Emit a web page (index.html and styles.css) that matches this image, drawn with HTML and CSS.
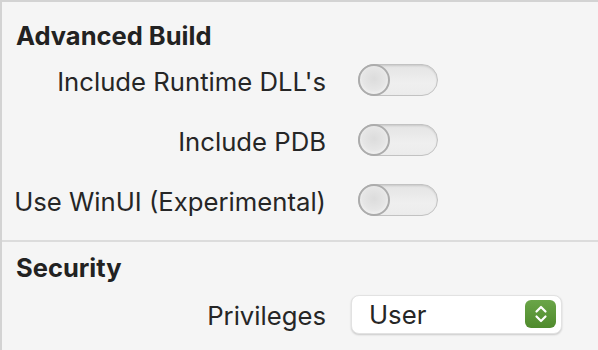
FILE: index.html
```html
<!DOCTYPE html>
<html lang="en">
<head>
  <meta charset="UTF-8" />
  <title>Build Settings</title>
  <link rel="stylesheet" href="styles.css">
</head>
<body>
  <div class="panel">
    <section class="group">
      <h2>Advanced Build</h2>
      <div class="rows">
        <label class="lbl">Include Runtime DLL's</label>
        <div class="switch"><span class="knob"></span></div>

        <label class="lbl">Include PDB</label>
        <div class="switch"><span class="knob"></span></div>

        <label class="lbl">Use WinUI (Experimental)</label>
        <div class="switch"><span class="knob"></span></div>
      </div>
    </section>

    <section class="group group-last">
      <h2>Security</h2>
      <div class="rows rows-tall">
        <label class="lbl">Privileges</label>
        <div class="select">
          <span class="select-value">User</span>
          <span class="stepper">
            <svg width="14" height="20" viewBox="0 0 14 20">
              <path d="M2.5 7.5 L7 3 L11.5 7.5" fill="none" stroke="#fff" stroke-width="2.2" stroke-linecap="round" stroke-linejoin="round"/>
              <path d="M2.5 12.5 L7 17 L11.5 12.5" fill="none" stroke="#fff" stroke-width="2.2" stroke-linecap="round" stroke-linejoin="round"/>
            </svg>
          </span>
        </div>
      </div>
    </section>
  </div>
</body>
</html>
```

FILE: styles.css
```css
html, body {
  margin: 0;
  padding: 0;
  background: #f5f5f5;
}
body {
  font-family: Inter, "Noto Sans", sans-serif;
  color: #262626;
}
.panel {
  width: 598px;
  height: 350px;
  box-sizing: border-box;
  border-top: 2px solid #d3d3d3;
  border-left: 2px solid #d3d3d3;
  background: #f5f5f5;
  overflow: hidden;
}
.group {
  padding: 20px 0 10px 0;
  border-bottom: 2px solid #dcdcdc;
}
.group-last {
  padding-top: 12px;
  border-bottom: none;
}
h2 {
  margin: 0 0 0 14px;
  font-size: 25.5px;
  line-height: 28px;
  font-weight: 700;
  color: #222;
}
.rows {
  display: grid;
  grid-template-columns: 310px auto;
  grid-auto-rows: 60px;
  column-gap: 25px;
  align-items: center;
  justify-items: start;
  padding-left: 14px;
}
.rows-tall {
  grid-auto-rows: 64px;
}
.lbl {
  justify-self: end;
  padding-top: 3px;
  font-size: 25.7px;
  line-height: 30px;
  white-space: nowrap;
  color: #262626;
}
.switch {
  position: relative;
  width: 80px;
  height: 32px;
  margin-left: 7px;
  box-sizing: border-box;
  border-radius: 16px;
  border: 1px solid #c2c2c2;
  background: linear-gradient(#e4e4e4, #efefef 60%, #ececec);
  box-shadow: inset 0 1px 2px rgba(0, 0, 0, 0.12);
}
.knob {
  position: absolute;
  left: -1px;
  top: -1px;
  width: 32px;
  height: 32px;
  box-sizing: border-box;
  border-radius: 50%;
  border: 2px solid #acacac;
  background: radial-gradient(circle at 50% 45%, #dcdcdc 0%, #e6e6e6 55%, #f4f4f4 80%, #fafafa 100%);
}
.select {
  display: flex;
  align-items: center;
  justify-content: space-between;
  width: 211px;
  height: 39px;
  box-sizing: border-box;
  padding: 0 5px 0 17px;
  border-radius: 8px;
  background: #fff;
  border: 1px solid #e2e2e2;
  box-shadow: 0 1px 2px rgba(0, 0, 0, 0.18);
}
.select-value {
  font-size: 25.7px;
  color: #262626;
}
.stepper {
  display: flex;
  align-items: center;
  justify-content: center;
  width: 31px;
  height: 28px;
  border-radius: 6px;
  background: linear-gradient(#6aa548, #4f8a2c);
}
```
